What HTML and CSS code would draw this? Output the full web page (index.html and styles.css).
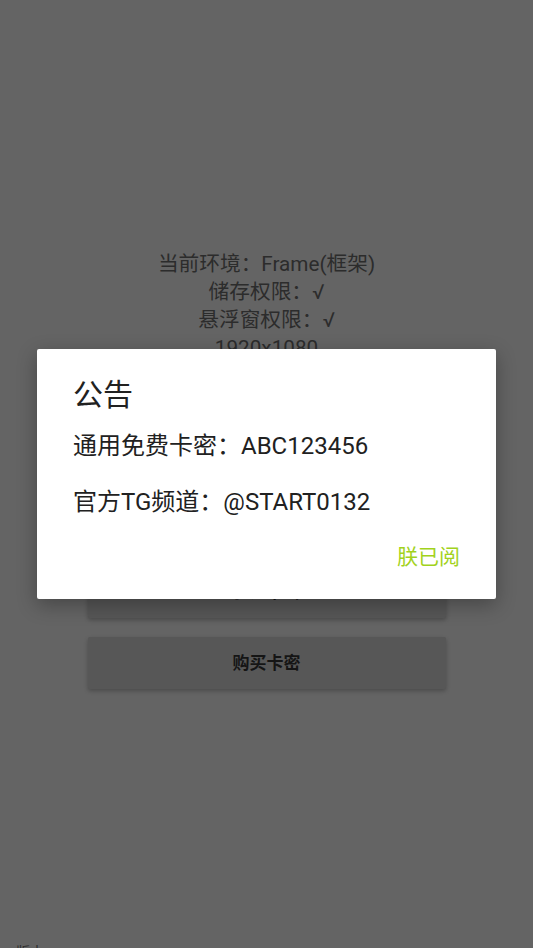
FILE: index.html
```html
<!DOCTYPE html>
<html lang="zh">
<head>
  <meta charset="UTF-8">
  <meta name="viewport" content="width=device-width, initial-scale=1.0">
  <title>公告</title>
  <link rel="stylesheet" href="styles.css">
</head>
<body>
  <div class="page">
    <div class="info">
      <p>当前环境：Frame(框架)</p>
      <p>储存权限：√</p>
      <p>悬浮窗权限：√</p>
      <p>1920x1080</p>
    </div>

    <div class="form">
      <div class="key_input"></div>
      <div class="btn">验证卡密</div>
      <div class="btn">购买卡密</div>
    </div>

    <div class="foot">版本</div>
  </div>

  <div class="dialog">
    <h2 class="dialog_tit">公告</h2>
    <p class="dialog_txt">通用免费卡密：ABC123456</p>
    <p class="dialog_txt">官方TG频道：@START0132</p>
    <div class="dialog_btns">
      <a href="#none" class="dialog_ok">朕已阅</a>
    </div>
  </div>
</body>
</html>
```
FILE: styles.css
```css
*{margin: 0; padding: 0; box-sizing: border-box;}
html, body{
  width: 533px;
  height: 948px;
  overflow: hidden;
}
body{
  background: #646464;
  font-family: Roboto, "Noto Sans CJK SC", sans-serif;
  position: relative;
}
.page{
  height: 948px;
  padding-top: 250px;
  display: flex;
  flex-direction: column;
  align-items: center;
}
.info{
  text-align: center;
  color: #2c2c2c;
  font-size: 20.7px;
  line-height: 28px;
}
.form{
  width: 358px;
  margin-top: 40px;
  display: flex;
  flex-direction: column;
  gap: 19px;
}
.key_input{
  height: 60px;
  border-bottom: 2px solid #3a3a3a;
  margin-bottom: 85px;
}
.btn{
  height: 52px;
  line-height: 52px;
  text-align: center;
  background: #575757;
  color: #151515;
  font-size: 17px;
  font-weight: bold;
  border-radius: 2px;
  box-shadow: 0 2px 4px rgba(0,0,0,0.25);
}
.foot{
  margin-top: auto;
  align-self: flex-start;
  margin-left: 16px;
  margin-bottom: -14px;
  color: #2c2c2c;
  font-size: 14px;
  line-height: 20px;
}
.dialog{
  position: absolute;
  left: 37px; top: 349px;
  width: 459px;
  height: 250px;
  background: #fff;
  border-radius: 2px;
  box-shadow: 0 6px 20px rgba(0,0,0,0.3);
  padding: 28px 36px 0 36px;
}
.dialog_tit{
  font-size: 30px;
  font-weight: normal;
  line-height: 36px;
  color: #212121;
}
.dialog_txt{
  font-size: 24px;
  line-height: 32px;
  color: #212121;
  margin-top: 17px;
}
.dialog_txt + .dialog_txt{margin-top: 24px;}
.dialog_btns{
  display: flex;
  justify-content: flex-end;
  margin-top: 21px;
}
.dialog_ok{
  font-size: 21px;
  line-height: 36px;
  color: #a2d21c;
  text-decoration: none;
}
```
